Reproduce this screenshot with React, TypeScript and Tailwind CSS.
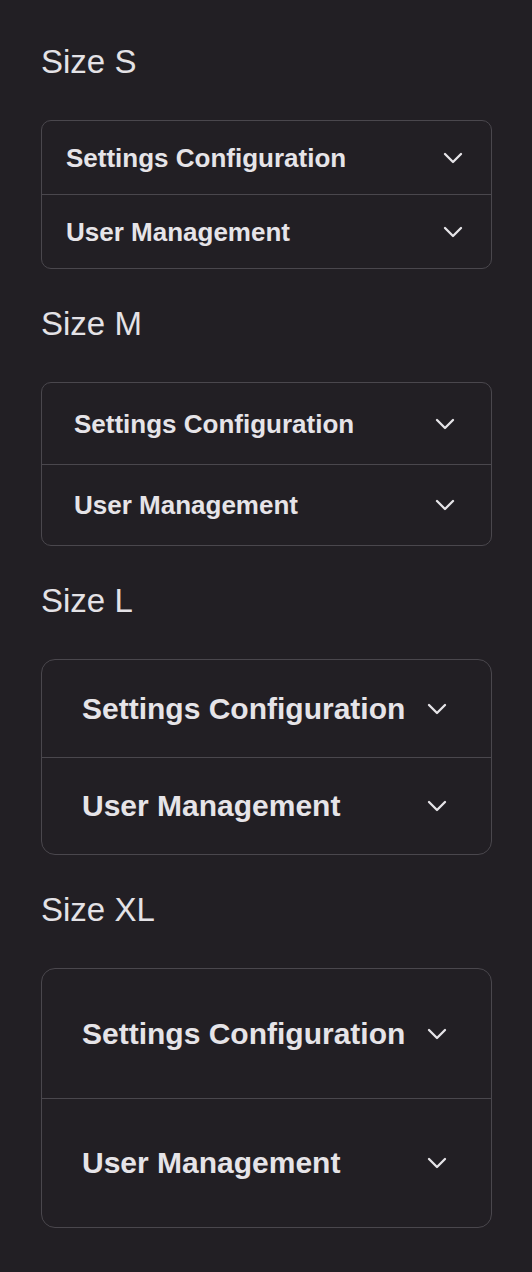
import { ChevronDown } from 'lucide-react';

type Size = 'S' | 'M' | 'L' | 'XL';

const items = ['Settings Configuration', 'User Management'];

const rowStyles: Record<Size, { rows: string[]; pad: string; text: string; box: string }> = {
  S: { rows: ['h-[73px]', 'h-[74px]'], pad: 'pl-6 pr-[22px]', text: 'text-[26px]', box: 'rounded-[10px]' },
  M: { rows: ['h-[81px]', 'h-[81px]'], pad: 'pl-8 pr-[30px]', text: 'text-[26px]', box: 'rounded-[10px]' },
  L: { rows: ['h-[97px]', 'h-[97px]'], pad: 'pl-10 pr-[38px]', text: 'text-[30px]', box: 'rounded-[14px]' },
  XL: { rows: ['h-[129px]', 'h-[129px]'], pad: 'pl-10 pr-[38px]', text: 'text-[30px]', box: 'rounded-[14px]' },
};

const AccordionBlock = ({ size }: { size: Size }) => {
  const s = rowStyles[size];
  return (
    <section className="flex flex-col">
      <h2 className="mb-[38px] text-[33px] leading-[40px] font-normal text-[#e4e2e6]">Size {size}</h2>
      <div className={`border border-[#4a474d] overflow-hidden ${s.box}`}>
        {items.map((label, i) => (
          <div
            key={label}
            className={`flex items-center justify-between ${s.rows[i]} ${s.pad} ${i > 0 ? 'border-t border-[#4a474d]' : ''}`}
          >
            <span className={`font-bold text-[#e6e4e8] leading-none ${s.text}`}>{label}</span>
            <ChevronDown size={32} strokeWidth={1.75} className="shrink-0 text-[#e6e4e8]" />
          </div>
        ))}
      </div>
    </section>
  );
};

export default function App() {
  return (
    <div
      className="min-h-[1272px] bg-[#221f24] pl-[41px] pr-10 pt-[42px] flex flex-col gap-[35px]"
      style={{ fontFamily: '"Liberation Sans", Arial, sans-serif' }}
    >
      <AccordionBlock size="S" />
      <AccordionBlock size="M" />
      <AccordionBlock size="L" />
      <AccordionBlock size="XL" />
    </div>
  );
}
